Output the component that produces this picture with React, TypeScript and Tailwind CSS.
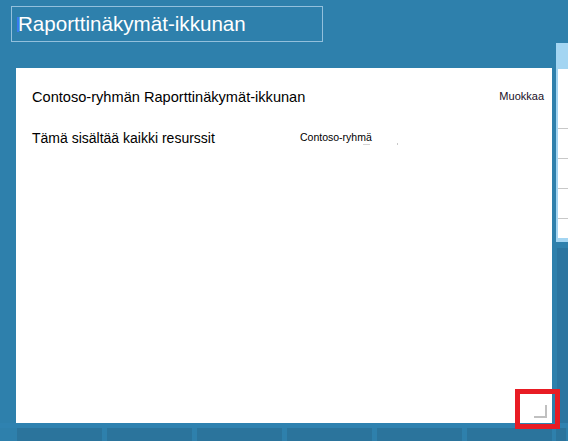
import React from 'react';

const font = { fontFamily: '"Liberation Sans", Arial, sans-serif' };

// Bottom row of dashboard tiles, partly hidden below the window
const tiles = [0, 1, 2, 3, 4, 5];

export default function App() {
  return (
    <div
      className="relative w-[568px] h-[441px] overflow-hidden bg-[#2e80ac] flex flex-col"
      style={font}
    >
      <div className="flex h-[423px]">
        {/* Left: window title + report card */}
        <div className="w-[556px] shrink-0 flex flex-col pl-[16px]">
          <div className="ml-[-5px] mt-[6px] w-[312px] h-[36px] border border-[#93c0dc] flex items-center pl-[5px]">
            <span className="w-[2px] h-[15px] bg-[#3a7bf0] mr-[-1px] mt-[1px]" />
            <span className="text-white text-[20.6px] leading-none mt-[1px]">Raporttinäkymät-ikkunan</span>
          </div>

          <div className="mt-[26px] w-[536px] h-[355px] bg-white flex flex-col pt-[21px] pl-[16px] pr-[8px] text-black">
            <div className="flex items-start justify-between">
              <span className="text-[14.6px] leading-[17px]">Contoso-ryhmän Raporttinäkymät-ikkunan</span>
              <span className="text-[11px] leading-[13px] mt-[1px] text-[#1a0f1f]">Muokkaa</span>
            </div>
            <div className="flex items-start mt-[24px]">
              <span className="w-[268px] shrink-0 text-[14px] leading-[16px]">Tämä sisältää kaikki resurssit</span>
              <span className="text-[10.5px] leading-[12px] mt-[1px]">Contoso-ryhmä</span>
            </div>
            <div className="flex items-center ml-[331px] mt-[-3px] gap-[27px]">
              <span className="w-[7px] h-[1px] bg-[#d4d4d4]" />
              <span className="w-[1px] h-[2px] bg-[#c9c9c9]" />
            </div>
          </div>
        </div>

        {/* Right: next panel peeking in */}
        <div className="flex-1 flex flex-col pt-[43px]">
          <div className="h-[199px] border-l-[2px] border-b-[4px] border-[#a3d5f2] bg-white flex flex-col">
            <div className="h-[26px] bg-[#a3d5f2]" />
            <div className="h-[59px]" />
            <div className="h-[1px] bg-[#c8c8c8]" />
            <div className="h-[29px]" />
            <div className="h-[1px] bg-[#c8c8c8]" />
            <div className="h-[29px]" />
            <div className="h-[1px] bg-[#c8c8c8]" />
            <div className="h-[29px]" />
            <div className="h-[1px] bg-[#c8c8c8]" />
          </div>
          <div className="mt-[6px] flex-1 bg-[#2b75a0] ml-[1px]" />
        </div>
      </div>

      <div className="h-[5px] bg-[#2f82b0]" />
      <div className="flex gap-[5px] pl-[17px] flex-1">
        {tiles.map((t) => (
          <div key={t} className="w-[85px] shrink-0 bg-[#2b749c]" />
        ))}
        <div className="w-[10px] shrink-0 bg-[#2b749c] ml-[-1px]" />
      </div>

      {/* resize grip */}
      <div className="absolute left-[534px] top-[405px] w-[13px] h-[13px] border-r-[2px] border-b-[2px] border-[#c0c0c0]" />
      {/* red highlight annotation */}
      <div className="absolute left-[515px] top-[389px] w-[45px] h-[40px] border-[5px] border-[#e81c24]" />
    </div>
  );
}
